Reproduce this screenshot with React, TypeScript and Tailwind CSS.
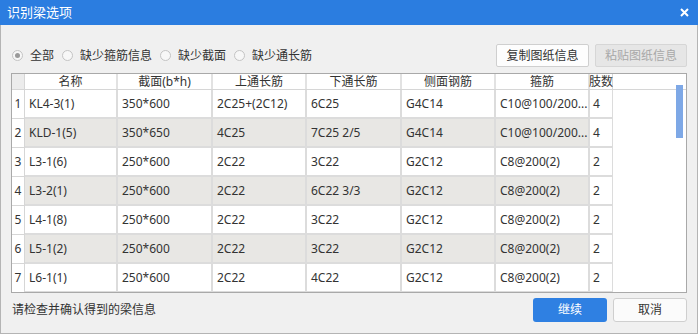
import React from 'react';

const rows = [
  ['KL4-3(1)', '350*600', '2C25+(2C12)', '6C25', 'G4C14', 'C10@100/200...', '4'],
  ['KLD-1(5)', '350*650', '4C25', '7C25 2/5', 'G4C14', 'C10@100/200...', '4'],
  ['L3-1(6)', '250*600', '2C22', '3C22', 'G2C12', 'C8@200(2)', '2'],
  ['L3-2(1)', '250*600', '2C22', '6C22 3/3', 'G2C12', 'C8@200(2)', '2'],
  ['L4-1(8)', '250*600', '2C22', '3C22', 'G2C12', 'C8@200(2)', '2'],
  ['L5-1(2)', '250*600', '2C22', '3C22', 'G2C12', 'C8@200(2)', '2'],
  ['L6-1(1)', '250*600', '2C22', '4C22', 'G2C12', 'C8@200(2)', '2'],
];

const headers = ['名称', '截面(b*h)', '上通长筋', '下通长筋', '侧面钢筋', '箍筋'];
const widths = ['w-[93px]', 'w-[95px]', 'w-[94px]', 'w-[95px]', 'w-[94px]', 'w-[94px]'];

function Radio({ label, checked }: { label: string; checked?: boolean }) {
  return (
    <div className="flex items-center gap-[7px]">
      <span className="w-[11px] h-[11px] rounded-full border border-[#c4c4c4] bg-[#f7f7f7] flex items-center justify-center">
        {checked && <span className="w-[5px] h-[5px] rounded-full bg-[#9a9a9a]" />}
      </span>
      <span>{label}</span>
    </div>
  );
}

export default function App() {
  return (
    <div
      className="w-[698px] h-[334px] bg-[#f0f0f0] border-x border-b border-[#b4b4b4] flex flex-col text-[12px] text-[#333]"
      style={{ fontFamily: '"Noto Sans", "Noto Sans CJK SC", sans-serif' }}
    >
      <div className="h-[25px] bg-[#2b7de0] flex items-center justify-between pl-[7px] pr-[9px] shrink-0 -mx-px">
        <span className="text-white text-[13px]">识别梁选项</span>
        <svg width="9" height="9" viewBox="0 0 9 9">
          <path d="M1 1L8 8M8 1L1 8" stroke="white" strokeWidth="2" />
        </svg>
      </div>

      <div className="flex items-center justify-between pl-[11px] pr-[10px] mt-[19px] h-[23px]">
        <div className="flex items-center gap-[8px]">
          <Radio label="全部" checked />
          <Radio label="缺少箍筋信息" />
          <Radio label="缺少截面" />
          <Radio label="缺少通长筋" />
        </div>
        <div className="flex gap-[6px]">
          <div className="w-[93px] h-[23px] bg-[#fdfdfd] border border-[#cfcfcf] rounded-[2px] flex items-center justify-center">
            复制图纸信息
          </div>
          <div className="w-[92px] h-[23px] bg-[#e6e6e6] border border-[#d6d6d6] rounded-[2px] flex items-center justify-center text-[#a8a8a8]">
            粘贴图纸信息
          </div>
        </div>
      </div>

      <div className="mx-[10px] mt-[6px] h-[220px] border border-[#a9a9a9] bg-white relative flex flex-col overflow-hidden">
        <div className="flex h-[16px] border-b border-[#d6d6d6] shrink-0">
          <div className="w-[13px] bg-[#ececec] border-r border-[#d6d6d6]" />
          {headers.map((h, i) => (
            <div key={h} className={`${widths[i]} bg-white border-r-2 border-[#e2e2e2] flex items-center justify-center leading-none`}>
              {h}
            </div>
          ))}
          <div className="w-[23px] bg-white border-r border-[#d6d6d6] flex items-center justify-center leading-none whitespace-nowrap">
            肢数
          </div>
          <div className="flex-1 bg-white" />
        </div>
        {rows.map((r, ri) => {
          const bg = ri % 2 === 1 ? 'bg-[#e8e7e4]' : 'bg-white';
          return (
            <div key={ri} className="flex h-[29px] shrink-0">
              <div className="w-[13px] bg-white border-r border-b border-[#d6d6d6] flex items-center justify-center">
                {ri + 1}
              </div>
              {r.slice(0, 6).map((c, ci) => (
                <div
                  key={ci}
                  className={`${widths[ci]} ${bg} border-r-2 border-b-2 border-[#dcdcdc] flex items-center pl-[4px] whitespace-nowrap overflow-hidden`}
                >
                  {c}
                </div>
              ))}
              <div className="w-[23px] bg-white border-r border-b-2 border-[#dcdcdc] flex items-center pl-[3px]">
                {r[6]}
              </div>
              <div className="flex-1 bg-white" />
            </div>
          );
        })}
        <div className="absolute right-[3px] top-[11px] w-[7px] h-[53px] bg-[#7ea8e6]" />
      </div>

      <div className="flex items-center justify-between pl-[11px] pr-[10px] mt-[5px] h-[24px]">
        <span>请检查并确认得到的梁信息</span>
        <div className="flex gap-[6px]">
          <div className="w-[74px] h-[24px] bg-[#2f80e2] rounded-[3px] flex items-center justify-center text-white">
            继续
          </div>
          <div className="w-[74px] h-[24px] bg-[#fbfbfb] border border-[#cfcfcf] rounded-[3px] flex items-center justify-center">
            取消
          </div>
        </div>
      </div>
    </div>
  );
}
